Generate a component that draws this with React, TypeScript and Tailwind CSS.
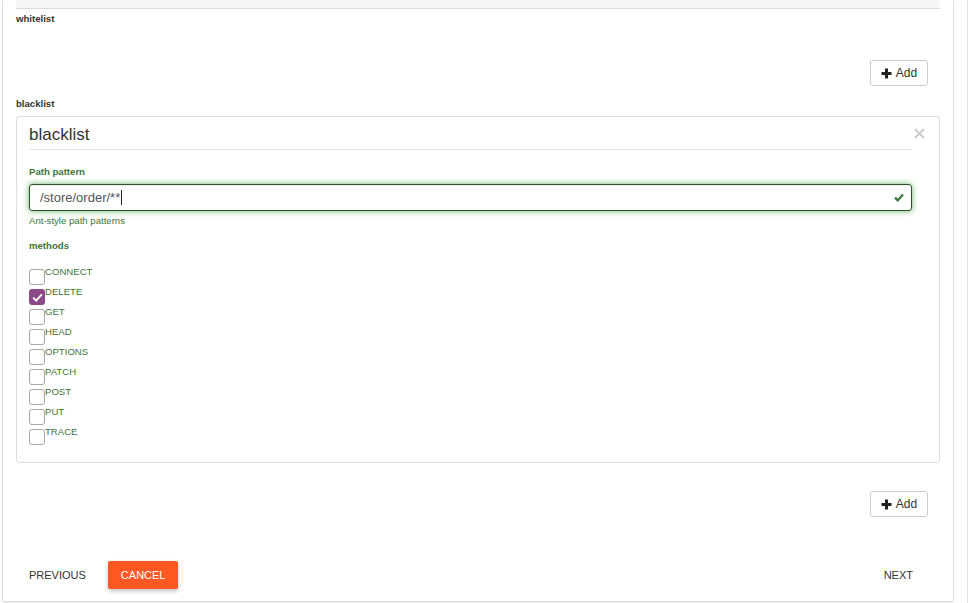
import {useState} from "react";

const METHODS = ["CONNECT", "DELETE", "GET", "HEAD", "OPTIONS", "PATCH", "POST", "PUT", "TRACE"];

const font = "font-['Liberation_Sans',Arial,sans-serif]";

const PlusIcon = () => (
  <svg width="11" height="11" viewBox="0 0 11 11" className="shrink-0">
    <path d="M5.5 0.5v10M0.5 5.5h10" stroke="#222" strokeWidth="3"/>
  </svg>
);

const AddButton = () => (
  <div className="flex justify-end pr-[12px]">
    <button className="h-[26px] w-[58px] flex items-center justify-center gap-[4px] border border-[#ccc] rounded-[3px] bg-white text-[12px] text-[#333]">
      <PlusIcon/>
      <span>Add</span>
    </button>
  </div>
);

const Checkbox = ({checked}: {checked: boolean}) => (
  <span
    className={
      checked
        ? "mt-[4px] w-[16px] h-[16px] rounded-[3px] bg-[#8d4a8b] flex items-center justify-center shrink-0"
        : "mt-[4px] w-[16px] h-[16px] rounded-[3px] border border-[#a8a8a8] bg-white shrink-0"
    }
  >
    {checked && (
      <svg width="11" height="9" viewBox="0 0 11 9">
        <path d="M1.2 4.6l3 3 5.6-6.2" stroke="#fff" strokeWidth="1.8" fill="none"/>
      </svg>
    )}
  </span>
);

const App = () => {
  const [checked] = useState<string[]>(["DELETE"]);

  return (
    <div className={`flex h-[603px] w-[974px] overflow-hidden bg-white ${font}`}>
      <div className="ml-[2px] w-[952px] h-[602px] border border-t-0 border-[#dedede] rounded-b-[2px] shadow-[0_1px_2px_rgba(0,0,0,0.08)] px-[13px] flex flex-col">
        <div className="h-[9px] bg-[#f7f7f7] border-b border-[#dcdcdc]"/>

        <div className="mt-[4px] text-[9.6px] leading-[12px] font-bold text-[#333]">whitelist</div>
        <div className="mt-[35px]">
          <AddButton/>
        </div>

        <div className="mt-[12px] text-[9.6px] leading-[12px] font-bold text-[#333]">blacklist</div>

        <div className="relative mt-[6px] border border-[#dddddd] rounded-[3px] pl-[12px] pr-[27px] pb-[17px]">
          <div className="pt-[6px] pb-[2px] border-b border-[#e2e2e2] text-[17px] leading-[24px] text-[#333]">
            blacklist
          </div>
          <button className="absolute top-[10px] right-[14px] w-[12px] h-[12px] flex items-center justify-center">
            <svg width="11" height="11" viewBox="0 0 11 11">
              <path d="M1 1l9 9M10 1l-9 9" stroke="#c9c9c9" strokeWidth="1.8"/>
            </svg>
          </button>

          <div className="mt-[16px] text-[9.6px] leading-[12px] font-bold text-[#3c763d]">Path pattern</div>
          <div className="mt-[6px] relative h-[27px] border border-[#2b542c] rounded-[3px] shadow-[inset_0_1px_1px_rgba(0,0,0,0.075),0_0_6px_#67b168] flex items-center pl-[10px]">
            <span className="text-[13px] text-[#555]">/store/order/**</span>
            <span className="w-px h-[15px] bg-[#222] ml-px"/>
            <svg width="10" height="9" viewBox="0 0 10 9" className="absolute right-[7px] top-[8px]">
              <path d="M1 4.6l2.8 2.8L9 1.6" stroke="#3c763d" strokeWidth="2.2" fill="none"/>
            </svg>
          </div>
          <div className="mt-[4px] text-[9.6px] leading-[12px] text-[#3c763d]">Ant-style path patterns</div>

          <div className="mt-[13px] text-[9.6px] leading-[12px] font-bold text-[#3c763d]">methods</div>
          <div className="mt-[13px] flex flex-col">
            {METHODS.map(m => (
              <label key={m} className="flex items-start h-[20px]">
                <Checkbox checked={checked.includes(m)}/>
                <span className="mt-[1px] text-[9.6px] leading-[12px] text-[#3c763d]">{m}</span>
              </label>
            ))}
          </div>
        </div>

        <div className="mt-[28px]">
          <AddButton/>
        </div>

        <div className="mt-[44px] flex items-center pr-[14px]">
          <button className="h-[28px] px-[13px] text-[11px] text-[#333]">PREVIOUS</button>
          <button className="ml-[9px] h-[28px] px-[13px] text-[11px] text-white bg-[#ff5722] rounded-[2px] shadow-[0_2px_4px_rgba(0,0,0,0.25)]">CANCEL</button>
          <div className="flex-1"/>
          <button className="h-[28px] px-[13px] text-[11px] text-[#333]">NEXT</button>
        </div>
      </div>
      <div className="ml-[13px] flex-1 border-l border-[#e2e2e2]"/>
    </div>
  );
};

export default App;
